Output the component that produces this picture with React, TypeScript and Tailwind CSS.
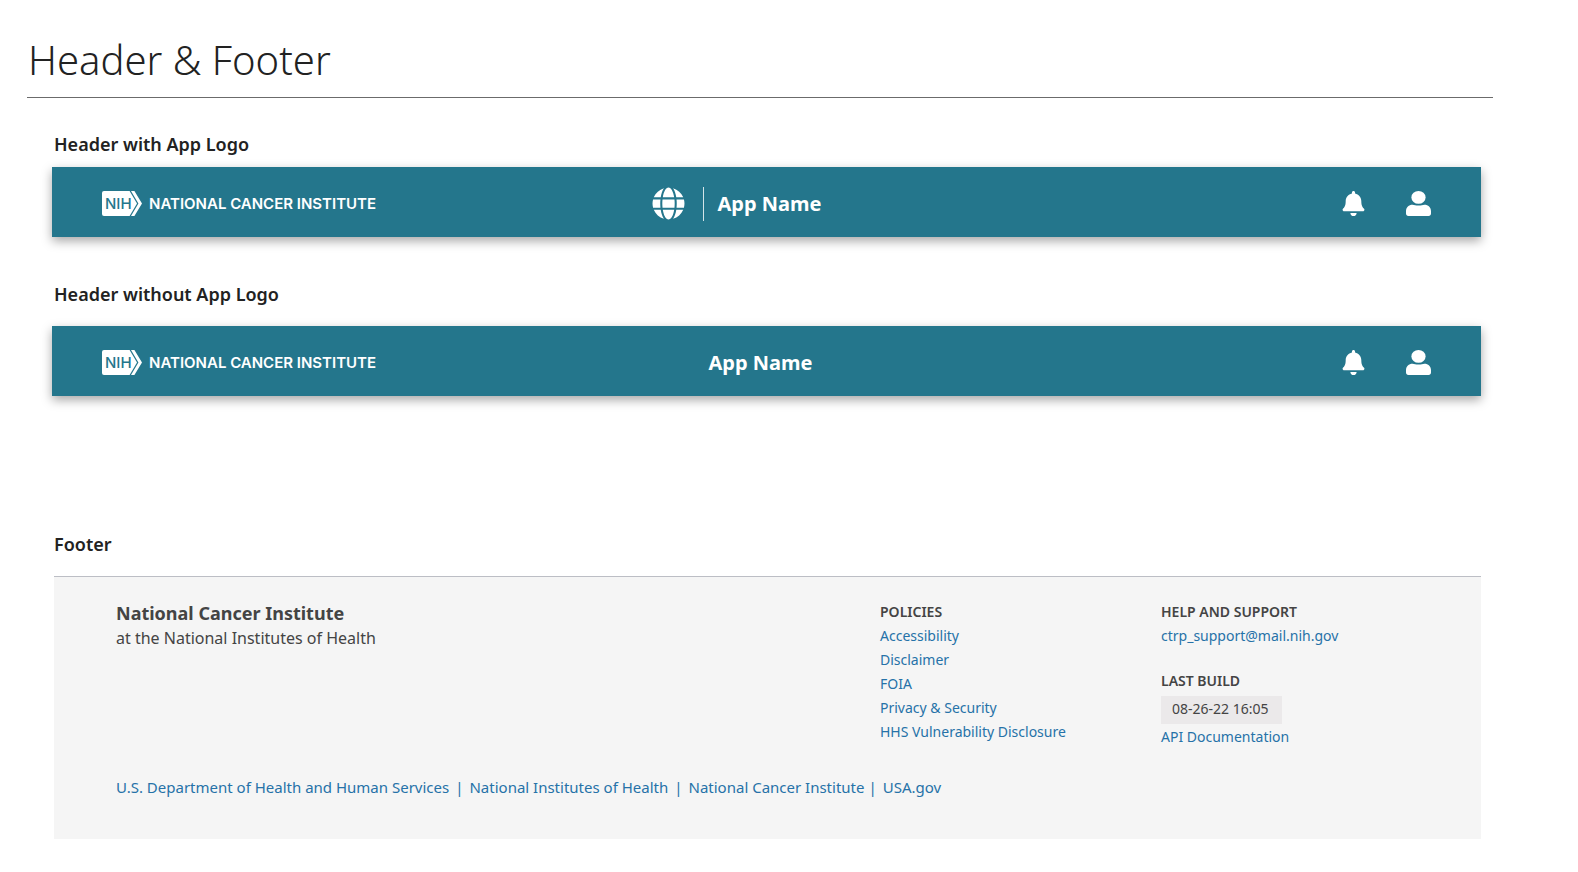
import type { ReactNode } from 'react'
import { FaBell, FaGlobe } from 'react-icons/fa'

interface FooterLink {
  label: string
  href: string
}

const policyLinks: FooterLink[] = [
  { label: 'Accessibility', href: '#accessibility' },
  { label: 'Disclaimer', href: '#disclaimer' },
  { label: 'FOIA', href: '#foia' },
  { label: 'Privacy & Security', href: '#privacy' },
  { label: 'HHS Vulnerability Disclosure', href: '#disclosure' }
]

function NihLogo() {
  return (
    <a href="#home" className="flex items-center gap-[7px] justify-self-start text-white">
      <svg viewBox="0 0 40 25" className="h-[25px] w-10" aria-hidden="true">
        <path d="M2 0H27.6L35 12.5L27.6 25H2A2 2 0 0 1 0 23V2A2 2 0 0 1 2 0Z" fill="currentColor" />
        <path d="M29 0H32.4L40 12.5L32.4 25H29L36.4 12.5Z" fill="currentColor" />
        <text
          x="3"
          y="18"
          fontSize="15"
          fontWeight="500"
          fill="#24768c"
          className="font-['Inter',sans-serif]"
        >
          NIH
        </text>
      </svg>
      <span className="font-['Inter',sans-serif] text-[15px] leading-6 font-semibold whitespace-nowrap">
        NATIONAL CANCER INSTITUTE
      </span>
    </a>
  )
}

function UserIcon() {
  return (
    <svg viewBox="0 0 25 25" className="size-[25px]" fill="currentColor" aria-hidden="true">
      <ellipse cx="12.5" cy="6.4" rx="7.1" ry="6.4" />
      <path d="M6.6 13.7C8.4 13.7 9.6 14.5 12.5 14.5S16.6 13.7 18.4 13.7C22.2 13.7 25 16.4 25 20V22.6C25 24 24 25 22.6 25H2.4C1 25 0 24 0 22.6V20C0 16.4 2.8 13.7 6.6 13.7Z" />
    </svg>
  )
}

function AppHeader({ children }: { children: ReactNode }) {
  return (
    <header className="mr-3 ml-[25px] grid h-[70px] grid-cols-[1fr_auto_1fr] items-center bg-[#24768c] px-[50px] pt-[3px] text-white shadow-[0_4px_10px_rgba(0,0,0,0.35)]">
      <NihLogo />
      {children}
      <div className="flex items-center gap-10 justify-self-end">
        <button type="button" aria-label="Notifications">
          <FaBell size={25} />
        </button>
        <button type="button" aria-label="Account">
          <UserIcon />
        </button>
      </div>
    </header>
  )
}

function SectionTitle({ children }: { children: ReactNode }) {
  return <h2 className="ml-[27px] text-lg leading-6 font-semibold text-[#222]">{children}</h2>
}

function AppFooter() {
  return (
    <footer className="mr-3 ml-[27px] border-t border-[#bcbec5] bg-[#f5f5f5] px-[62px] pt-[23px] pb-10 text-sm leading-6 text-[#444]">
      <div className="grid grid-cols-[1fr_281px_258px]">
        <div className="pt-px">
          <p className="text-lg leading-[25px] font-bold">National Cancer Institute</p>
          <p className="text-base leading-6">at the National Institutes of Health</p>
        </div>

        <div>
          <h3 className="font-semibold">POLICIES</h3>
          <ul className="text-[#2672a8]">
            {policyLinks.map((link) => (
              <li key={link.href}>
                <a href={link.href}>{link.label}</a>
              </li>
            ))}
          </ul>
        </div>

        <div>
          <h3 className="font-semibold">HELP AND SUPPORT</h3>
          <a href="mailto:ctrp_support@mail.nih.gov" className="block text-[#2672a8]">
            ctrp_support@mail.nih.gov
          </a>
          <h3 className="mt-[21px] font-semibold">LAST BUILD</h3>
          <p className="mt-[3px] mb-px w-[121px] bg-[#ebe9ea] px-[11px] pt-px pb-[3px]">08-26-22 16:05</p>
          <a href="#api" className="block text-[#2672a8]">
            API Documentation
          </a>
        </div>
      </div>

      <nav className="mt-[26px] flex text-[15px] text-[#2672a8]">
        <a href="#hhs">U.S. Department of Health and Human Services</a>
        <span className="mx-1.5">|</span>
        <a href="#nih">National Institutes of Health</a>
        <span className="mx-1.5">|</span>
        <a href="#nci">National Cancer Institute</a>
        <span className="mr-1.5 ml-1">|</span>
        <a href="#usa">USA.gov</a>
      </nav>
    </footer>
  )
}

export default function App() {
  return (
    <main className="min-h-screen bg-white pt-9 pr-[85px] pb-8 pl-[27px] font-['Noto_Sans',sans-serif]">
      <h1 className="border-b border-[#6b6b6b] pb-[13px] pl-px text-[40px] leading-[48px] font-light text-[#222]">
        Header &amp; Footer
      </h1>

      <section className="mt-[34px] flex flex-col gap-[11px]">
        <SectionTitle>Header with App Logo</SectionTitle>
        <AppHeader>
          <div className="flex items-center pr-[60px]">
            <FaGlobe size={33} />
            <div className="mr-[14px] ml-[18px] h-[34px] w-px bg-white/80" />
            <span className="text-xl font-bold">App Name</span>
          </div>
        </AppHeader>
      </section>

      <section className="mt-[45px] flex flex-col gap-5">
        <SectionTitle>Header without App Logo</SectionTitle>
        <AppHeader>
          <span className="pr-3 text-xl font-bold">App Name</span>
        </AppHeader>
      </section>

      <section className="mt-[136px] flex flex-col gap-5">
        <SectionTitle>Footer</SectionTitle>
        <AppFooter />
      </section>
    </main>
  )
}
